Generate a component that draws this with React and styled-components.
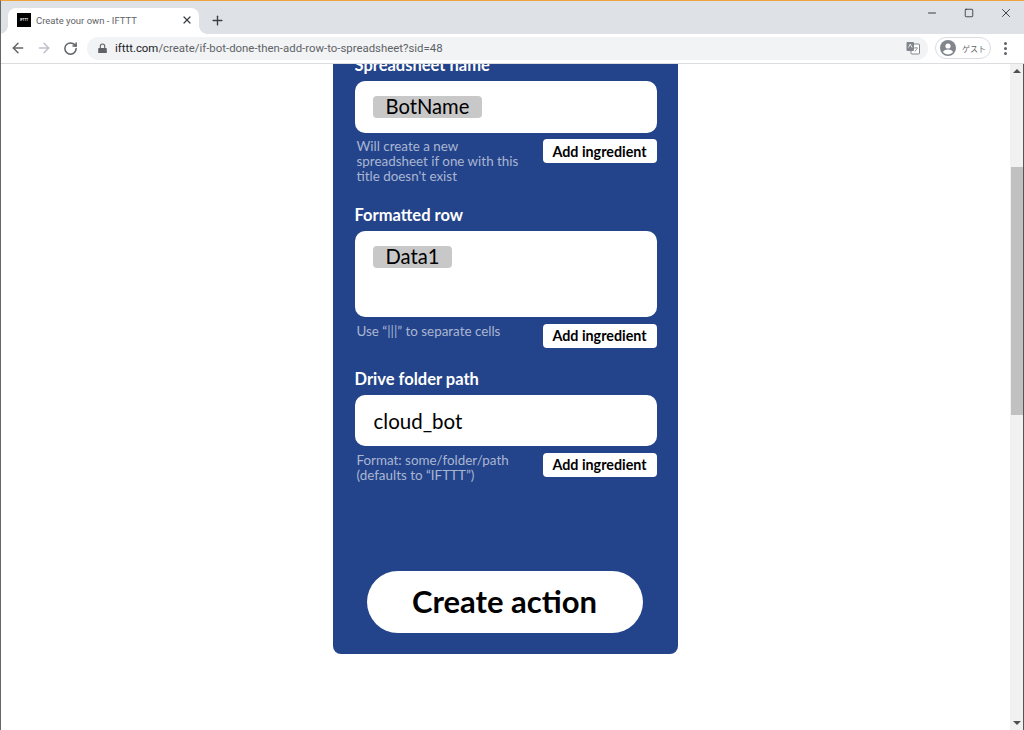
import React from 'react';
import styled, { createGlobalStyle } from 'styled-components';
import { ArrowLeft, ArrowRight, RotateCw, X, Plus, Minus, Square } from 'lucide-react';

const GlobalStyle = createGlobalStyle`
html, body {
    margin: 0;
    height: 100%;
    overflow: hidden;
    background: #fff;
}
* { box-sizing: border-box; }
`;

function App() {
    return (
        <Win>
            <GlobalStyle />
            <TabStrip>
                <Tab>
                    <Favicon>IFTTT</Favicon>
                    <TabTitle>Create your own - IFTTT</TabTitle>
                    <X size={12} strokeWidth={2.4} color="#3c4043" />
                </Tab>
                <NewTab><Plus size={15} strokeWidth={2.2} color="#3c4043" /></NewTab>
                <WinControls>
                    <WinBtn><Minus size={12} strokeWidth={1.6} color="#111" /></WinBtn>
                    <WinBtn><Square size={10} strokeWidth={1.7} color="#111" /></WinBtn>
                    <WinBtn><X size={14} strokeWidth={1.3} color="#111" /></WinBtn>
                </WinControls>
            </TabStrip>
            <Toolbar>
                <NavBtn><ArrowLeft size={16} strokeWidth={2.2} color="#5f6368" /></NavBtn>
                <NavBtn><ArrowRight size={16} strokeWidth={2.2} color="#bdc1c6" /></NavBtn>
                <NavBtn><RotateCw size={15} strokeWidth={2.4} color="#5f6368" /></NavBtn>
                <Omnibox>
                    <svg width="9" height="11" viewBox="0 0 9 11">
                        <path d="M1 5h7a.8.8 0 0 1 .8.8v4.2H.2V5.8A.8.8 0 0 1 1 5z" fill="#5f6368" />
                        <path d="M2.3 5V3.2a2.2 2.2 0 0 1 4.400 0V5" fill="none" stroke="#5f6368" strokeWidth="1.1" />
                    </svg>
                    <Url><b>ifttt.com</b>/create/if-bot-done-then-add-row-to-spreadsheet?sid=48</Url>
                    <svg width="14" height="14" viewBox="0 0 14 14">
                        <rect x="5" y="3" width="8.500" height="10" rx="1" fill="#fff" stroke="#80868b" />
                        <rect x="0.500" y="1" width="7.500" height="9" rx="1" fill="#80868b" />
                        <path d="M2.500 6.500l1.800-3.500 1.800 3.500" fill="none" stroke="#fff" strokeWidth=".8" />
                        <path d="M8 7h4M10 6v1M11 7.500c-.5 1.500-1.200 2.300-2.400 3" fill="none" stroke="#80868b" strokeWidth=".8" />
                    </svg>
                </Omnibox>
                <GuestPill>
                    <svg width="16" height="16" viewBox="0 0 16 16">
                        <circle cx="8" cy="8" r="8" fill="#80868b" />
                        <circle cx="8" cy="6" r="2.600" fill="#fff" />
                        <path d="M2.800 12c1-1.900 3.200-2.600 5.200-2.600s4.200.7 5.200 2.600A6.600 6.600 0 0 1 8 14.400 6.600 6.600 0 0 1 2.800 12z" fill="#fff" />
                    </svg>
                    <GuestLabel>ゲスト</GuestLabel>
                </GuestPill>
                <MenuDots><i /><i /><i /></MenuDots>
            </Toolbar>
            <Viewport>
                <Page>
                    <Card>
                        <Field>
                            <Label>Spreadsheet name</Label>
                            <InputBox>
                                <Chip>BotName</Chip>
                            </InputBox>
                            <HelpRow>
                                <Hint>Will create a new spreadsheet if one with this title doesn't exist</Hint>
                                <AddButton>Add ingredient</AddButton>
                            </HelpRow>
                        </Field>
                        <Field>
                            <Label>Formatted row</Label>
                            <InputBox $tall>
                                <Chip>Data1</Chip>
                            </InputBox>
                            <HelpRow>
                                <Hint>Use “|||” to separate cells</Hint>
                                <AddButton>Add ingredient</AddButton>
                            </HelpRow>
                        </Field>
                        <Field>
                            <Label>Drive folder path</Label>
                            <InputBox>
                                <PlainValue>cloud_bot</PlainValue>
                            </InputBox>
                            <HelpRow>
                                <Hint>Format: some/folder/path (defaults to “IFTTT”)</Hint>
                                <AddButton>Add ingredient</AddButton>
                            </HelpRow>
                        </Field>
                        <CreateButton>Create action</CreateButton>
                    </Card>
                </Page>
                <Scrollbar>
                    <ArrowUp />
                    <ThumbTrack>
                        <Thumb />
                    </ThumbTrack>
                    <ArrowDown />
                </Scrollbar>
            </Viewport>
        </Win>
    );
}

const Win = styled.div`
width: 1024px;
height: 730px;
display: flex;
flex-direction: column;
overflow: hidden;
border-top: 1px solid #f0a33c;
border-left: 1px solid #666;
font-family: "Lato", "Noto Sans", sans-serif;
`;

const TabStrip = styled.div`
height: 33px;
background: #dee1e6;
display: flex;
align-items: flex-end;
padding-left: 7px;
flex-shrink: 0;
`;

const Tab = styled.div`
width: 191px;
height: 26px;
background: #fff;
border-radius: 8px 8px 0 0;
display: flex;
align-items: center;
padding: 0 6px 2px 9px;
position: relative;

&::before, &::after {
    content: '';
    position: absolute;
    bottom: 0;
    width: 8px;
    height: 8px;
}
&::before {
    left: -8px;
    background: radial-gradient(circle at 0 0, #dee1e6 7.500px, #fff 8px);
}
&::after {
    right: -8px;
    background: radial-gradient(circle at 100% 0, #dee1e6 7.500px, #fff 8px);
}
`;

const Favicon = styled.div`
width: 14px;
height: 14px;
background: #000;
color: #fff;
font: 700 3px "Liberation Sans", sans-serif;
display: flex;
align-items: center;
justify-content: center;
flex-shrink: 0;
`;

const TabTitle = styled.div`
flex: 1;
margin-left: 5px;
font: 9.500px "Roboto", sans-serif;
color: #5f6368;
white-space: nowrap;
`;

const NewTab = styled.div`
width: 24px;
height: 24px;
margin: 0 0 2px 6px;
display: flex;
align-items: center;
justify-content: center;
`;

const WinControls = styled.div`
margin-left: auto;
align-self: flex-start;
display: flex;
`;

const WinBtn = styled.div`
width: 37px;
height: 24px;
display: flex;
align-items: center;
justify-content: center;
`;

const Toolbar = styled.div`
height: 30px;
background: #fff;
border-bottom: 1px solid #dadce0;
display: flex;
align-items: center;
padding: 0 0 1px 4px;
flex-shrink: 0;
`;

const NavBtn = styled.div`
width: 26px;
height: 24px;
display: flex;
align-items: center;
justify-content: center;
`;

const Omnibox = styled.div`
width: 841px;
height: 23px;
margin-left: 4px;
background: #f1f3f4;
border-radius: 12px;
display: flex;
align-items: center;
padding: 0 8px 0 11px;
`;

const Url = styled.div`
flex: 1;
margin-left: 8px;
font: 11.400px "Roboto", sans-serif;
color: #5f6368;
white-space: nowrap;
b {
    font-weight: 400;
    color: #202124;
}
`;

const GuestPill = styled.div`
width: 56px;
height: 22px;
margin-left: 7px;
border: 1px solid #dadce0;
border-radius: 11px;
display: flex;
align-items: center;
padding-left: 4px;
`;

const GuestLabel = styled.span`
margin-left: 6px;
font: 8px "Noto Sans CJK JP", sans-serif;
color: #5f6368;
white-space: nowrap;
`;

const MenuDots = styled.div`
margin-left: 13px;
display: flex;
flex-direction: column;
gap: 2px;
i {
    width: 3px;
    height: 3px;
    border-radius: 50%;
    background: #5f6368;
}
`;

const Viewport = styled.div`
flex: 1;
min-height: 0;
display: flex;
`;

const Page = styled.div`
flex: 1;
min-width: 0;
overflow: hidden;
padding-left: 332px;
`;

const Card = styled.div`
width: 345px;
margin-top: -8px;
padding: 0 21.500px 21px 21.500px;
background: #23448a;
border-radius: 0 0 8px 8px;
display: flex;
flex-direction: column;
gap: 22px;
`;

const Field = styled.div`
display: flex;
flex-direction: column;
`;

const Label = styled.div`
height: 20px;
margin-bottom: 5px;
font-size: 16.500px;
line-height: 18px;
font-weight: 700;
color: #fff;
white-space: nowrap;
`;

const InputBox = styled.div`
height: ${(p) => (p.$tall ? '86px' : '51.500px')};
background: #fff;
border-radius: 10px;
padding: 15px 18px 0;
display: flex;
align-items: flex-start;
`;

const Chip = styled.span`
height: 22px;
padding: 0 13px;
background: #c8c8c8;
border-radius: 4px;
font-size: 20.200px;
line-height: 21px;
color: #000;
`;

const PlainValue = styled.span`
margin: 0 0 0 1px;
font-size: 20.500px;
line-height: 22px;
color: #000;
`;

const HelpRow = styled.div`
margin-top: 6.500px;
padding-left: 2px;
display: flex;
justify-content: space-between;
align-items: flex-start;
`;

const Hint = styled.div`
width: 168px;
font-size: 13.400px;
line-height: 15px;
color: #aab6d2;
`;

const AddButton = styled.button`
width: 114px;
height: 24px;
padding: 0;
border: none;
background: #fff;
border-radius: 4px;
font-family: inherit;
font-size: 14.300px;
font-weight: 700;
color: #000;
`;

const CreateButton = styled.button`
align-self: center;
width: 276px;
height: 62px;
margin: 66.500px 2px 0 0;
padding: 0 0 3px;
border: none;
border-radius: 31px;
background: #fff;
font-family: inherit;
font-size: 31px;
font-weight: 700;
color: #000;
`;

const Scrollbar = styled.div`
width: 14px;
background: #f1f1f1;
border-right: 1px solid #555;
display: flex;
flex-direction: column;
align-items: center;
`;

const ArrowUp = styled.div`
margin-top: 5px;
width: 0;
height: 0;
border-left: 4px solid transparent;
border-right: 4px solid transparent;
border-bottom: 4px solid #505050;
flex-shrink: 0;
`;

const ArrowDown = styled.div`
margin-bottom: 5px;
width: 0;
height: 0;
border-left: 4px solid transparent;
border-right: 4px solid transparent;
border-top: 4px solid #505050;
flex-shrink: 0;
`;

const ThumbTrack = styled.div`
flex: 1;
width: 100%;
padding: 94px 0 0 1px;
`;

const Thumb = styled.div`
height: 248px;
background: #c1c1c1;
`;

export default App;
